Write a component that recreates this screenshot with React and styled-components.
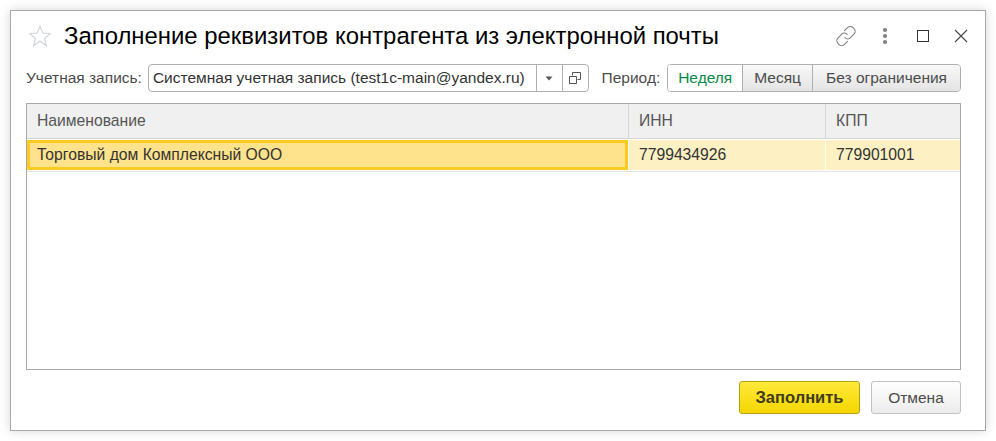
import React from 'react';
import styled, { createGlobalStyle } from 'styled-components';

const GlobalStyle = createGlobalStyle`
  html, body {
    margin: 0;
    padding: 0;
    background: #ffffff;
  }
  body {
    font-family: "Liberation Sans", Arial, sans-serif;
  }
`;

const Page = styled.div`
  width: 996px;
  height: 441px;
  padding: 10px;
  box-sizing: border-box;
  overflow: hidden;
`;

const Window = styled.div`
  width: 976px;
  height: 421px;
  box-sizing: border-box;
  border: 1px solid #a8a8a8;
  background: #ffffff;
  box-shadow: 0 0 10px rgba(0, 0, 0, 0.16);
  padding: 0 24px 0 15px;
  display: flex;
  flex-direction: column;
`;

const TitleBar = styled.div`
  height: 50px;
  display: flex;
  align-items: center;
  margin-right: -11px;
`;

const Star = styled.svg`
  width: 24px;
  height: 24px;
  margin-left: 2px;
  flex: none;
`;

const Title = styled.h1`
  margin: 0 0 0 12px;
  flex: 1;
  font-size: 23.9px;
  font-weight: 400;
  color: #000000;
  white-space: nowrap;
`;

const WinIcons = styled.div`
  display: flex;
  align-items: center;
`;

const WinIcon = styled.svg`
  width: 22px;
  height: 22px;
  margin-left: ${(props) => props.$gap}px;
  flex: none;
`;

const Toolbar = styled.div`
  height: 28px;
  margin-top: 3px;
  display: flex;
  align-items: center;
  font-size: 15.5px;
`;

const Label = styled.span`
  color: #4b4b4b;
  white-space: nowrap;
  margin-right: ${(props) => props.$gap}px;
`;

const Field = styled.div`
  width: 441px;
  height: 28px;
  box-sizing: border-box;
  border: 1px solid #b0b0b0;
  border-radius: 4px;
  display: flex;
  align-items: stretch;
  margin-right: 13px;
`;

const FieldText = styled.div`
  flex: 1;
  padding-left: 4px;
  line-height: 26px;
  color: #333333;
  white-space: nowrap;
  overflow: hidden;
`;

const FieldButton = styled.div`
  width: 26px;
  box-sizing: border-box;
  border-left: 1px solid #b0b0b0;
  display: flex;
  align-items: center;
  justify-content: center;
`;

const Segments = styled.div`
  display: flex;
  height: 28px;
  box-sizing: border-box;
  border: 1px solid #b0b0b0;
  border-radius: 4px;
  overflow: hidden;
`;

const Segment = styled.div`
  width: ${(props) => props.$width}px;
  text-align: center;
  line-height: 26px;
  white-space: nowrap;
  color: ${(props) => (props.$active ? '#0a8a4a' : '#4b4b4b')};
  background: ${(props) =>
    props.$active ? '#ffffff' : 'linear-gradient(#f8f8f8, #e4e4e4)'};
  & + & {
    border-left: 1px solid #b0b0b0;
  }
`;

const Table = styled.div`
  margin-top: 11px;
  height: 267px;
  box-sizing: border-box;
  border: 1px solid #a8a8a8;
  font-size: 15.7px;
`;

const Row = styled.div`
  display: grid;
  grid-template-columns: 601px 197px 1fr;
  box-sizing: border-box;
  height: ${(props) => props.$height}px;
  border-bottom: ${(props) => (props.$line ? '1px solid #e4e4e4' : 'none')};
`;

const HeadCell = styled.div`
  background: #f0f0f0;
  color: #555555;
  padding-left: 10px;
  line-height: 33px;
  border-bottom: 1px solid #d6d6d6;
  border-left: ${(props) => (props.$first ? 'none' : '1px solid #d6d6d6')};
`;

const Cell = styled.div`
  background: #fdf1c3;
  color: #333333;
  padding-left: 10px;
  line-height: 29px;
  margin: 1px 0;
  border-left: 1px solid #ffffff;
`;

const CurrentCell = styled.div`
  background: #fee28c;
  color: #333333;
  box-sizing: border-box;
  border: 3px solid #fccb21;
  margin: 1px 0;
  padding-left: 7px;
  line-height: 23px;
`;

const Footer = styled.div`
  margin-top: 11px;
  display: flex;
  justify-content: flex-end;
  gap: 11px;
`;

const PrimaryButton = styled.div`
  width: 121px;
  height: 33px;
  box-sizing: border-box;
  border: 1px solid #b59f12;
  border-radius: 3px;
  background: linear-gradient(#ffe93a, #f4d600);
  color: #3f3a20;
  font-size: 16.5px;
  font-weight: 700;
  text-align: center;
  line-height: 31px;
`;

const Button = styled.div`
  width: 90px;
  height: 33px;
  box-sizing: border-box;
  border: 1px solid #c2c2c2;
  border-radius: 3px;
  background: linear-gradient(#ffffff, #ececec);
  color: #4b4b4b;
  font-size: 15.5px;
  text-align: center;
  line-height: 31px;
`;

export default function App() {
  return (
    <Page>
      <GlobalStyle />
      <Window>
        <TitleBar>
          <Star viewBox="0 0 24 24">
            <path
              d="M12 2.2l2.9 6.9 7.3.6-5.6 4.8 1.8 7.2L12 17l-6.4 4.7 1.8-7.2-5.6-4.8 7.3-.6z"
              fill="none"
              stroke="#d0d4d8"
              strokeWidth="1.1"
            />
          </Star>
          <Title>Заполнение реквизитов контрагента из электронной почты</Title>
          <WinIcons>
            <WinIcon viewBox="0 0 22 22" $gap={0}>
              <g fill="none" stroke="#7f7f7f" strokeWidth="1.1" strokeLinecap="round">
                <path d="M9.5 5.7l3-3a4 4 0 0 1 5.6 0l.9.9a4 4 0 0 1 0 5.6l-3.5 3.5a4 4 0 0 1-5.6 0" />
                <path d="M12.5 16.3l-3 3a4 4 0 0 1-5.6 0l-.9-.9a4 4 0 0 1 0-5.6l3.5-3.5a4 4 0 0 1 5.6 0" />
              </g>
            </WinIcon>
            <WinIcon viewBox="0 0 22 22" $gap={16.5}>
              <circle cx="11" cy="5" r="2.1" fill="#808080" />
              <circle cx="11" cy="11" r="2.1" fill="#808080" />
              <circle cx="11" cy="17" r="2.1" fill="#808080" />
            </WinIcon>
            <WinIcon viewBox="0 0 22 22" $gap={16.5}>
              <rect x="5.5" y="5.5" width="11" height="11" fill="none" stroke="#333333" />
            </WinIcon>
            <WinIcon viewBox="0 0 22 22" $gap={16}>
              <path d="M5 5l12 12M17 5L5 17" stroke="#444444" strokeWidth="1.1" />
            </WinIcon>
          </WinIcons>
        </TitleBar>
        <Toolbar>
          <Label $gap={6}>Учетная запись:</Label>
          <Field>
            <FieldText>Системная учетная запись (test1c-main@yandex.ru)</FieldText>
            <FieldButton>
              <svg width="8" height="5" viewBox="0 0 8 5">
                <path d="M0.5 0.5h7L4 4.5z" fill="#555555" />
              </svg>
            </FieldButton>
            <FieldButton>
              <svg width="12" height="12" viewBox="0 0 12 12">
                <path
                  d="M3.5 3.5V.5h8v7h-3M.5 4.5h7v7h-7z"
                  fill="none"
                  stroke="#555555"
                />
              </svg>
            </FieldButton>
          </Field>
          <Label $gap={7}>Период:</Label>
          <Segments>
            <Segment $active $width={74}>Неделя</Segment>
            <Segment $width={69}>Месяц</Segment>
            <Segment $width={147}>Без ограничения</Segment>
          </Segments>
        </Toolbar>
        <Table>
          <Row $height={35}>
            <HeadCell $first>Наименование</HeadCell>
            <HeadCell>ИНН</HeadCell>
            <HeadCell>КПП</HeadCell>
          </Row>
          <Row $height={33} $line>
            <CurrentCell>Торговый дом Комплексный ООО</CurrentCell>
            <Cell>7799434926</Cell>
            <Cell>779901001</Cell>
          </Row>
        </Table>
        <Footer>
          <PrimaryButton>Заполнить</PrimaryButton>
          <Button>Отмена</Button>
        </Footer>
      </Window>
    </Page>
  );
}
